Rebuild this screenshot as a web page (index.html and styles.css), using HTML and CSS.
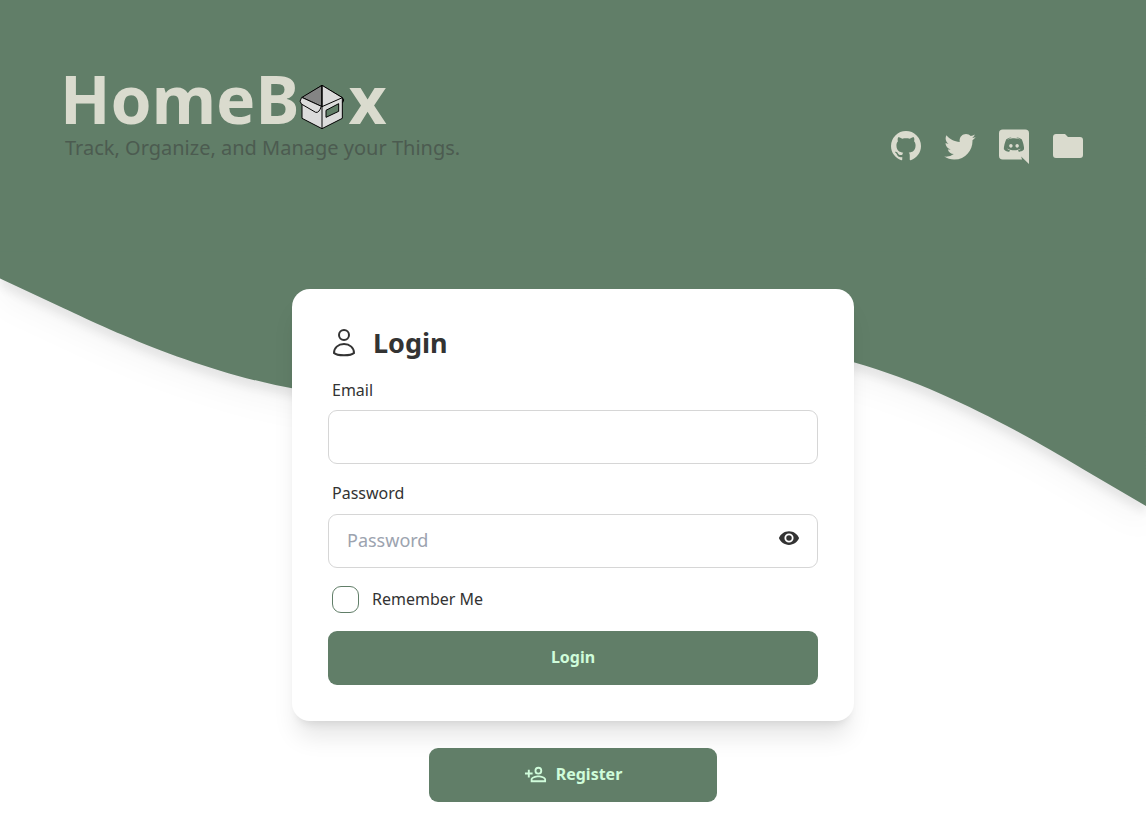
FILE: index.html
```html
<!DOCTYPE html>
<html lang="en">
<head>
    <meta charset="UTF-8">
    <meta name="viewport" content="width=device-width, initial-scale=1.0">
    <title>HomeBox | Organize and Tag Your Stuff</title>
    <link rel="stylesheet" href="styles.css">
</head>
<body>
    <div class="backdrop">
        <div class="backdrop-fill"></div>
        <svg class="wave" viewBox="0 0 1440 320" aria-hidden="true">
            <path d="M0,32L80,69.3C160,107,320,181,480,181.3C640,181,800,117,960,117.3C1120,128,1280,224,1360,271L1440,318L1440,-2L0,-2Z"/>
        </svg>
    </div>

    <div class="page">
        <header class="header">
            <div>
                <h1 class="logo" aria-label="HomeBox">
                    <span>HomeB</span>
                    <svg class="logo-box" viewBox="28 24 138 138" aria-hidden="true">
                        <path class="side" d="M37 66L97 28L158 65L158 127L97 158L37 127Z"/>
                        <path class="inside" d="M97 28L37 64L97 92Z"/>
                        <path class="side" d="M97 28L158 65L97 92Z"/>
                        <path class="side" d="M36 64L95 91Q88 112 78 109L35 84Q27 77 36 64Z"/>
                        <path class="line" d="M97 28V158M158 65Q166 71 159 80"/>
                        <path class="window" d="M109 103L147 83V106L109 124Z"/>
                    </svg>
                    <span>x</span>
                </h1>
                <p class="tagline">Track, Organize, and Manage your Things.</p>
            </div>
            <nav class="links">
                <a href="#" title="Project Github" aria-label="Project Github">
                    <svg viewBox="0 0 24 24"><path d="M12 2A10 10 0 0 0 2 12c0 4.42 2.87 8.17 6.84 9.5c.5.08.66-.23.66-.5v-1.69c-2.77.6-3.36-1.34-3.36-1.34c-.46-1.16-1.11-1.47-1.11-1.47c-.91-.62.07-.6.07-.6c1 .07 1.53 1.03 1.53 1.03c.87 1.52 2.34 1.07 2.91.83c.09-.65.35-1.09.63-1.34c-2.22-.25-4.55-1.11-4.55-4.92c0-1.11.38-2 1.03-2.71c-.1-.25-.45-1.29.1-2.64c0 0 .84-.27 2.75 1.02c.79-.22 1.65-.33 2.5-.33c.85 0 1.71.11 2.5.33c1.91-1.29 2.75-1.02 2.75-1.02c.55 1.35.2 2.39.1 2.64c.65.71 1.03 1.6 1.03 2.71c0 3.82-2.34 4.66-4.57 4.91c.36.31.69.92.69 1.85V21c0 .27.16.59.67.5C19.14 20.16 22 16.42 22 12A10 10 0 0 0 12 2"/></svg>
                </a>
                <a href="#" title="Follow the Developer" aria-label="Follow the Developer">
                    <svg viewBox="0 0 24 24"><path d="M22.46 6c-.77.35-1.6.58-2.46.69c.88-.53 1.56-1.37 1.88-2.38c-.83.5-1.75.85-2.72 1.05C18.37 4.5 17.26 4 16 4c-2.35 0-4.27 1.92-4.27 4.29c0 .34.04.67.11.98C8.28 9.09 5.11 7.38 3 4.79c-.37.63-.58 1.37-.58 2.15c0 1.49.75 2.81 1.91 3.56c-.71 0-1.37-.2-1.95-.5v.03c0 2.08 1.48 3.82 3.44 4.21a4.22 4.22 0 0 1-1.93.07a4.28 4.28 0 0 0 4 2.98a8.521 8.521 0 0 1-5.33 1.84c-.34 0-.68-.02-1.02-.06C3.44 20.29 5.7 21 8.12 21C16 21 20.33 14.46 20.33 8.79c0-.19 0-.37-.01-.56c.84-.6 1.56-1.36 2.14-2.23Z"/></svg>
                </a>
                <a href="#" title="Join the Discord" aria-label="Join the Discord">
                    <svg viewBox="0 0 24 24"><path d="M22 24L16.75 19L17.38 21H4.5A2.5 2.5 0 0 1 2 18.5V3.5A2.5 2.5 0 0 1 4.5 1H19.5A2.5 2.5 0 0 1 22 3.5V24M12 6.8C9.32 6.8 7.44 7.95 7.44 7.95C8.47 7.03 10.27 6.5 10.27 6.5L10.1 6.33C8.41 6.36 6.88 7.53 6.88 7.53C5.16 11.12 5.27 14.22 5.27 14.22C6.67 16.03 8.75 15.9 8.75 15.9L9.46 15C8.21 14.73 7.42 13.62 7.42 13.62C7.42 13.62 9.3 14.9 12 14.9C14.7 14.9 16.58 13.62 16.58 13.62C16.58 13.62 15.79 14.73 14.54 15L15.25 15.9C15.25 15.9 17.33 16.03 18.73 14.22C18.73 14.22 18.84 11.12 17.12 7.53C17.12 7.53 15.59 6.36 13.9 6.33L13.73 6.5C13.73 6.5 15.53 7.03 16.56 7.95C16.56 7.95 14.68 6.8 12 6.8M9.93 10.59C10.58 10.59 11.11 11.16 11.1 11.86C11.1 12.55 10.58 13.13 9.93 13.13C9.29 13.13 8.77 12.55 8.77 11.86C8.77 11.16 9.28 10.59 9.93 10.59M14.1 10.59C14.75 10.59 15.27 11.16 15.27 11.86C15.27 12.55 14.75 13.13 14.1 13.13C13.46 13.13 12.94 12.55 12.94 11.86C12.94 11.16 13.45 10.59 14.1 10.59Z"/></svg>
                </a>
                <a href="#" title="Read The Docs" aria-label="Read The Docs">
                    <svg viewBox="0 0 24 24"><path d="M10 4H4c-1.11 0-2 .89-2 2v12a2 2 0 0 0 2 2h16a2 2 0 0 0 2-2V8a2 2 0 0 0-2-2h-8z"/></svg>
                </a>
            </nav>
        </header>

        <main class="content">
            <form class="card">
                <h2 class="card-title">
                    <svg viewBox="0 0 32 32" aria-hidden="true">
                        <circle cx="16" cy="8" r="5"/>
                        <path d="M16 17C10 17 6 21 6 26C9 29 23 29 26 26C26 21 22 17 16 17Z"/>
                    </svg>
                    Login
                </h2>
                <div class="field">
                    <label for="email">Email</label>
                    <input id="email" class="input" type="text">
                </div>
                <div class="field">
                    <label for="password">Password</label>
                    <div class="password">
                        <input id="password" class="input" type="password" placeholder="Password">
                        <button class="toggle" type="button" aria-label="Toggle Password Show">
                            <svg viewBox="0 0 24 24"><path d="M12 9a3 3 0 0 0-3 3a3 3 0 0 0 3 3a3 3 0 0 0 3-3a3 3 0 0 0-3-3m0 8a5 5 0 0 1-5-5a5 5 0 0 1 5-5a5 5 0 0 1 5 5a5 5 0 0 1-5 5m0-12.5C7 4.5 2.73 7.61 1 12c1.73 4.39 6 7.5 11 7.5s9.27-3.11 11-7.5c-1.73-4.39-6-7.5-11-7.5"/></svg>
                        </button>
                    </div>
                </div>
                <label class="remember">
                    <input type="checkbox">
                    <span>Remember Me</span>
                </label>
                <button class="btn" type="submit">Login</button>
            </form>
            <button class="btn btn-register" type="button">
                <svg viewBox="0 0 24 24" aria-hidden="true"><path d="M15 4a4 4 0 0 0-4 4a4 4 0 0 0 4 4a4 4 0 0 0 4-4a4 4 0 0 0-4-4m0 1.9a2.1 2.1 0 1 1 0 4.2A2.1 2.1 0 0 1 12.9 8A2.1 2.1 0 0 1 15 5.9M4 7v3H1v2h3v3h2v-3h3v-2H6V7zm11 6c-2.67 0-8 1.33-8 4v3h16v-3c0-2.67-5.33-4-8-4m0 1.9c2.97 0 6.1 1.46 6.1 2.1v1.1H8.9V17c0-.64 3.1-2.1 6.1-2.1"/></svg>
                Register
            </button>
        </main>
    </div>
</body>
</html>
```
FILE: styles.css
```css
* {
    box-sizing: border-box;
}
body {
    margin: 0;
    font-family: "Noto Sans", sans-serif;
    font-size: 16px;
    line-height: 24px;
    color: #333;
    background-color: #fff;
}
h1, h2, p {
    margin: 0;
}
svg {
    display: block;
}
button, input {
    font-family: inherit;
}

/* green area with the wave, sits behind everything */
.backdrop {
    position: absolute;
    top: 0;
    left: 0;
    width: 100%;
    z-index: -1;
    overflow: hidden;
    filter: drop-shadow(0 20px 13px rgba(0, 0, 0, 0.03)) drop-shadow(0 8px 5px rgba(0, 0, 0, 0.08));
}
.backdrop-fill {
    height: 253px;
    background-color: #617e68;
}
.wave {
    width: 100%;
    fill: #617e68;
    overflow: visible;
}

.page {
    display: flex;
    flex-direction: column;
    padding-bottom: 32px;
}
.header {
    display: flex;
    justify-content: space-between;
    align-items: flex-end;
    padding: 64px 60px 0;
    color: #dadbce;
}
.logo {
    display: flex;
    font-size: 66px;
    line-height: 68px;
    font-weight: 700;
}
.logo-box {
    width: 46px;
    height: 46px;
    margin: 20px 3px 0 0;
    stroke: #000;
    stroke-width: 3;
    stroke-linejoin: round;
}
.side {
    fill: #dcdcdc;
}
.inside {
    fill: #848484;
}
.window {
    fill: #617e68;
}
.line {
    fill: none;
}
.tagline {
    margin-left: 5px;
    font-size: 20px;
    line-height: 32px;
    color: #4c5b50;
}
.links {
    display: flex;
    gap: 18px;
}
.links a {
    color: inherit;
}
.links svg {
    width: 36px;
    height: 36px;
    fill: currentColor;
    overflow: visible;
}

.content {
    display: flex;
    flex-direction: column;
    align-items: center;
    gap: 27px;
    padding: 125px 16px 0;
}
.card {
    display: flex;
    flex-direction: column;
    width: 100%;
    max-width: 562px;
    padding: 36px;
    background-color: #fff;
    border-radius: 18px;
    box-shadow: 0 20px 25px -5px rgba(0, 0, 0, 0.1), 0 8px 10px -6px rgba(0, 0, 0, 0.1);
}
.card-title {
    display: flex;
    align-items: center;
    gap: 13px;
    font-size: 27px;
    line-height: 36px;
}
.card-title svg {
    width: 32px;
    height: 32px;
    fill: none;
    stroke: currentColor;
    stroke-width: 2;
}
.field {
    display: flex;
    flex-direction: column;
    margin-bottom: 9px;
}
.field label {
    padding: 17px 4px 8px;
}
.field + .field label {
    padding: 8px 4px 9px;
}
.input {
    width: 100%;
    height: 54px;
    padding: 0 18px 2px;
    font-size: 18px;
    color: inherit;
    background-color: #fff;
    border: 1px solid #d6d6d6;
    border-radius: 9px;
}
.input::placeholder {
    color: #9ca3af;
}
.password {
    position: relative;
}
.toggle {
    position: absolute;
    top: 13px;
    right: 18px;
    padding: 0;
    color: inherit;
    background: none;
    border: 0;
    cursor: pointer;
}
.toggle svg {
    width: 22px;
    height: 22px;
    fill: currentColor;
}
.remember {
    display: flex;
    align-items: center;
    gap: 13px;
    padding: 9px 4px 18px;
    cursor: pointer;
}
.remember span {
    padding-bottom: 2px;
}
.remember input {
    appearance: none;
    width: 27px;
    height: 27px;
    margin: 0;
    border: 1px solid #617e68;
    border-radius: 9px;
}
.remember input:checked {
    background-color: #617e68;
}
.btn {
    display: flex;
    justify-content: center;
    align-items: center;
    gap: 9px;
    height: 54px;
    padding: 0 18px 2px;
    font-size: 16px;
    font-weight: 700;
    color: #cffcda;
    background-color: #617e68;
    border: 0;
    border-radius: 9px;
    cursor: pointer;
}
.btn svg {
    width: 23px;
    height: 23px;
    fill: currentColor;
}
.btn-register {
    width: 288px;
}
```
